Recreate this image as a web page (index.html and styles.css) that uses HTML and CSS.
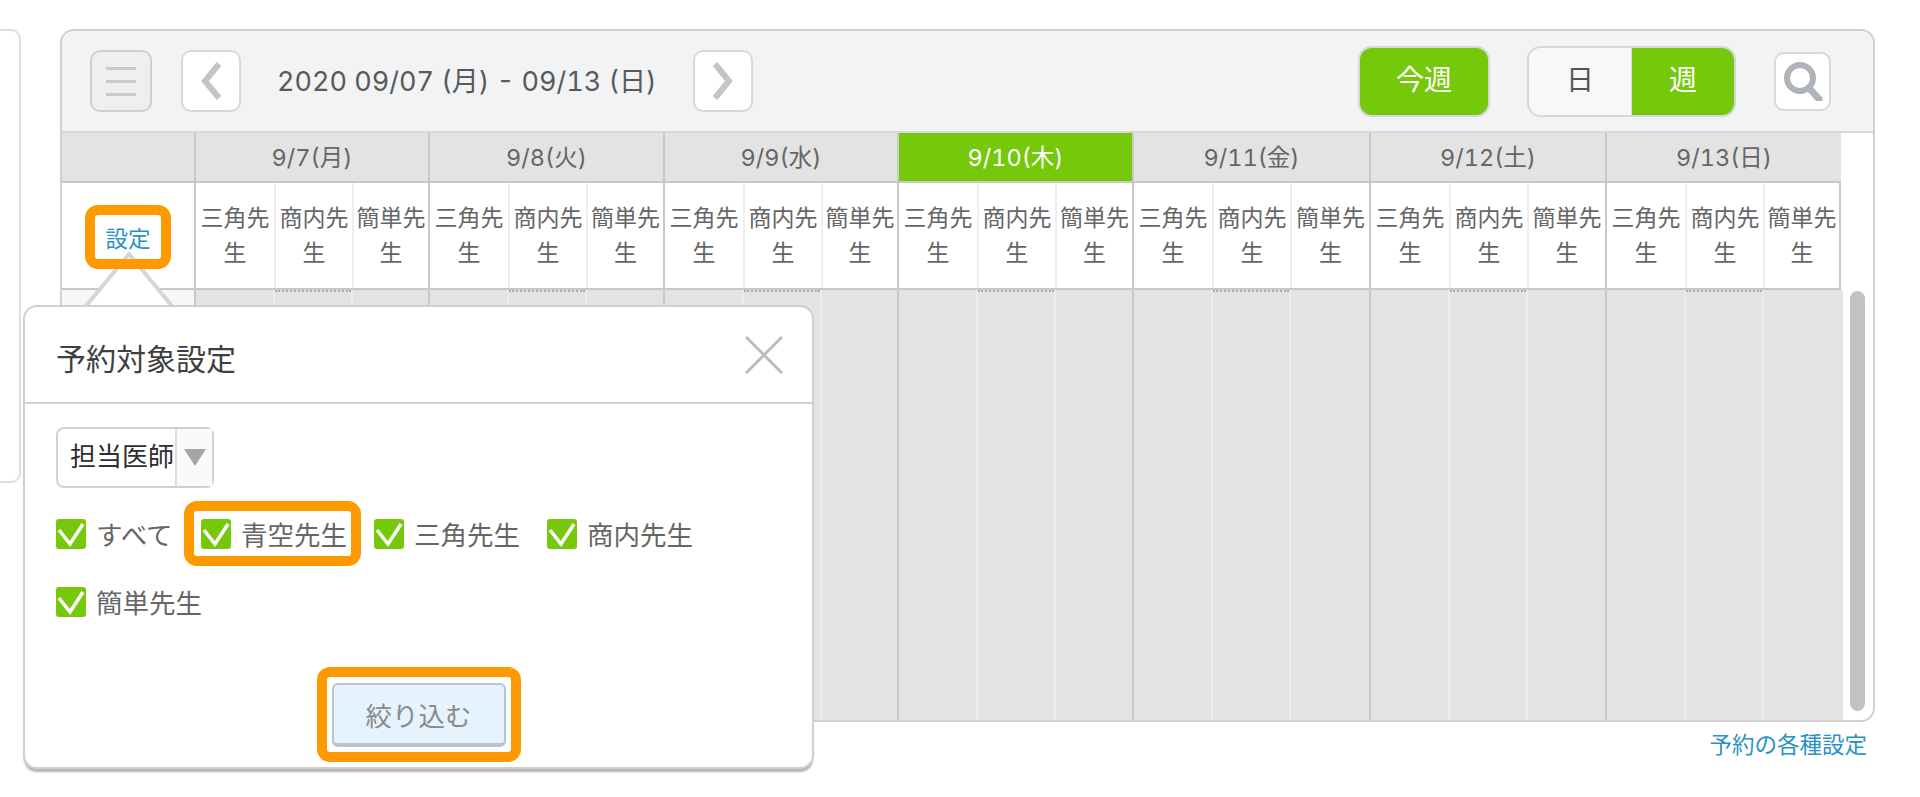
FILE: index.html
```html
<!DOCTYPE html>
<html lang="ja">
<head>
<meta charset="utf-8">
<title>予約</title>
<link rel="stylesheet" href="styles.css">
</head>
<body>
<div class="page">
  <aside class="side"></aside>
  <main class="main-col">
    <section class="panel">
      <header class="toolbar">
        <button class="btn menu" aria-label="menu"><span></span><span></span><span></span></button>
        <button class="btn nav" aria-label="prev"><svg width="24" height="38" viewBox="0 0 24 38"><path d="M20 2 L6 19 L20 36" class="chev"/></svg></button>
        <div class="range">2020 09/07 (月) - 09/13 (日)</div>
        <button class="btn nav next" aria-label="next"><svg width="24" height="38" viewBox="0 0 24 38"><path d="M4 2 L18 19 L4 36" class="chev"/></svg></button>
        <button class="btn today">今週</button>
        <div class="toggle"><span class="tog-day">日</span><span class="tog-week">週</span></div>
        <button class="btn search" aria-label="search"><svg width="40" height="40" viewBox="0 0 40 40"><circle cx="17" cy="17" r="13" class="mag"/><path d="M26 27 L36 38" class="mag handle"/></svg></button>
      </header>
      <div class="head-row cols">
        <div class="time-cell"></div>
        <div class="day">9/7(月)</div>
        <div class="day">9/8(火)</div>
        <div class="day">9/9(水)</div>
        <div class="day active">9/10(木)</div>
        <div class="day">9/11(金)</div>
        <div class="day">9/12(土)</div>
        <div class="day">9/13(日)</div>
      </div>
      <div class="names-row cols">
        <div class="time-cell setting"><a class="link">設定</a></div>
        <div class="day-names"><div>三角先生</div><div>商内先生</div><div>簡単先生</div></div>
        <div class="day-names"><div>三角先生</div><div>商内先生</div><div>簡単先生</div></div>
        <div class="day-names"><div>三角先生</div><div>商内先生</div><div>簡単先生</div></div>
        <div class="day-names"><div>三角先生</div><div>商内先生</div><div>簡単先生</div></div>
        <div class="day-names"><div>三角先生</div><div>商内先生</div><div>簡単先生</div></div>
        <div class="day-names"><div>三角先生</div><div>商内先生</div><div>簡単先生</div></div>
        <div class="day-names last"><div>三角先生</div><div>商内先生</div><div>簡単先生</div></div>
      </div>
      <div class="body-row">
        <div class="grid">
          <div class="time-body"></div>
          <div class="day-body"><i></i><i class="dot"></i><i></i></div>
          <div class="day-body"><i></i><i class="dot"></i><i></i></div>
          <div class="day-body"><i></i><i class="dot"></i><i></i></div>
          <div class="day-body"><i></i><i class="dot"></i><i></i></div>
          <div class="day-body"><i></i><i class="dot"></i><i></i></div>
          <div class="day-body"><i></i><i class="dot"></i><i></i></div>
          <div class="day-body"><i></i><i class="dot"></i><i></i></div>
        </div>
        <div class="scroll"><div class="thumb"></div></div>
      </div>
    </section>
    <a class="link foot-link">予約の各種設定</a>
  </main>

  <div class="pop-arrow"><svg width="92" height="56" viewBox="0 0 92 56"><path d="M0 54 L44 1 L88 54 Z" class="arrow-fill"/><path d="M1 54 L44 2 L87 54" class="arrow-line"/></svg></div>
  <div class="popup">
    <div class="pop-head">
      <h2 class="pop-title">予約対象設定</h2>
      <svg class="close" width="38" height="38" viewBox="0 0 38 38"><path d="M1 1 L37 37 M37 1 L1 37" class="close-line"/></svg>
    </div>
    <div class="pop-body">
      <div class="select"><span class="select-text">担当医師</span><span class="select-arrow"><svg width="22" height="17" viewBox="0 0 22 17"><path d="M0 0 H22 L11 17 Z" class="tri"/></svg></span></div>
      <div class="checks">
        <label class="check"><span class="box"><svg width="30" height="30" viewBox="0 0 30 30"><path d="M3 11 L14 25 L27 5" class="tick"/></svg></span>すべて</label>
        <label class="check"><span class="box"><svg width="30" height="30" viewBox="0 0 30 30"><path d="M3 11 L14 25 L27 5" class="tick"/></svg></span>青空先生</label>
        <label class="check"><span class="box"><svg width="30" height="30" viewBox="0 0 30 30"><path d="M3 11 L14 25 L27 5" class="tick"/></svg></span>三角先生</label>
        <label class="check"><span class="box"><svg width="30" height="30" viewBox="0 0 30 30"><path d="M3 11 L14 25 L27 5" class="tick"/></svg></span>商内先生</label>
        <label class="check"><span class="box"><svg width="30" height="30" viewBox="0 0 30 30"><path d="M3 11 L14 25 L27 5" class="tick"/></svg></span>簡単先生</label>
      </div>
      <div class="pop-foot"><button class="filter">絞り込む</button></div>
    </div>
  </div>

  <div class="mark mark-setting"></div>
  <div class="mark mark-check"></div>
  <div class="mark mark-filter"></div>
</div>
</body>
</html>
```
FILE: styles.css
```css
* { box-sizing: border-box; }
html, body { margin: 0; padding: 0; height: 797px; overflow: hidden; background: #fff; }
body { font-family: "Inter", "Noto Sans CJK JP", sans-serif; font-variant-numeric: tabular-nums; color: #666; }
.page { position: relative; width: 1920px; height: 797px; display: flex; align-items: flex-start; padding-top: 29px; }
button { font-family: inherit; padding: 0; margin: 0; cursor: pointer; }

.side { width: 21px; height: 454px; border: 2px solid #ddd; border-left: 0; border-radius: 0 10px 10px 0; flex: none; }
.main-col { margin-left: 39px; width: 1815px; flex: none; display: flex; flex-direction: column; }
.panel { width: 1815px; height: 693px; border: 2px solid #d0d0d0; border-radius: 14px; display: flex; flex-direction: column; overflow: hidden; background: #fff; }

.toolbar { height: 102px; flex: none; background: #f2f3f5; display: flex; align-items: center; padding: 0 0 0 28px; border-bottom: 2px solid #d8d8d8; }
.btn { border: 2px solid #d8d8d8; border-radius: 10px; background: #fff; display: flex; align-items: center; justify-content: center; flex: none; }
.menu { width: 62px; height: 62px; background: #efefef; border-color: #cfcfcf; flex-direction: column; gap: 10px; }
.menu span { display: block; width: 30px; height: 3px; background: #c9c9c9; }
.nav { width: 60px; height: 62px; margin-left: 29px; }
.chev { fill: none; stroke: #c4c4c4; stroke-width: 6; }
.range { width: 392px; margin-left: 36px; padding-bottom: 4px; font-size: 27px; color: #595959; white-space: nowrap; }
.next { margin-left: 24px; }
.today { width: 132px; height: 71px; margin-left: 605px; padding-bottom: 6px; background: #76c80b; color: #fff; font-size: 28px; border: 2px solid #d5d8da; border-radius: 14px; }
.toggle { width: 209px; height: 71px; margin-left: 37px; display: flex; border: 2px solid #d5d8da; border-radius: 14px; overflow: hidden; font-size: 28px; flex: none; }
.tog-day { width: 103px; padding-bottom: 6px; background: #f8f8f8; color: #555; display: flex; align-items: center; justify-content: center; border-right: 1px solid #ddd; }
.tog-week { flex: 1; padding-bottom: 6px; background: #76c80b; color: #fff; display: flex; align-items: center; justify-content: center; }
.search { width: 57px; height: 59px; margin-left: 38px; }
.mag { fill: none; stroke: #aeb4b9; stroke-width: 6; }
.handle { stroke-width: 7; stroke-linecap: round; }

.cols { display: grid; width: 1779px; grid-template-columns: 132px 234px 235px 234px 235px 237px 236px 236px; flex: none; }
.head-row { height: 50px; background: #e3e3e3; border-bottom: 2px solid #c8c8c8; font-size: 23.5px; }
.day { display: flex; align-items: center; justify-content: center; border-left: 2px solid #c8c8c8; color: #666; padding-bottom: 3px; }
.active { background: #76c80b; color: #fff; }

.names-row { height: 107px; border-bottom: 2px solid #c8c8c8; font-size: 23px; line-height: 35px; }
.setting { display: flex; align-items: center; justify-content: center; padding-top: 5px; }
.link { color: #2a93c5; font-size: 22.5px; }
.day-names { display: grid; grid-template-columns: 78px 78px 1fr; border-left: 2px solid #c8c8c8; min-width: 0; }
.day-names.last { border-right: 2px solid #c8c8c8; }
.day-names div { min-width: 0; text-align: center; padding: 18px 0 0; border-left: 2px solid #eee; color: #666; }
.day-names div:first-child { border-left: 0; }

.body-row { flex: 1; display: flex; min-height: 0; }
.grid { width: 1781px; display: grid; grid-template-columns: 132px 234px 235px 234px 235px 237px 236px 238px; flex: none; }
.time-body { background: #f7f7f7; }
.day-body { display: grid; grid-template-columns: 77px 78px 1fr; background: #e3e3e3; border-left: 2px solid #c8c8c8; min-width: 0; }
.day-body i { border-left: 2px solid #ececec; }
.day-body i:first-child { border-left: 0; }
.day-body .dot { position: relative; }
.day-body .dot::before { content: ""; position: absolute; left: 0; right: 0; top: 0; border-top: 2px dotted #aaa; }
.scroll { flex: 1; padding: 1px 0 0 7px; }
.thumb { width: 15px; height: 420px; background: #c2c2c2; border-radius: 8px; }

.foot-link { align-self: flex-end; margin: 7px 8px 0 0; line-height: 32px; }

.pop-arrow { position: absolute; left: 85px; top: 252px; width: 92px; height: 56px; }
.arrow-fill { fill: #fff; }
.arrow-line { fill: none; stroke: #d6d6d6; stroke-width: 4; }

.popup { position: absolute; left: 23px; top: 305px; width: 791px; height: 464px; background: #fff; border: 2px solid #d0d0d0; border-radius: 14px; box-shadow: 0 4px 2px -1px #b5b5b5; display: flex; flex-direction: column; }
.pop-head { height: 97px; flex: none; display: flex; align-items: center; justify-content: space-between; padding: 4px 29px 0 31px; border-bottom: 2px solid #d0d0d0; }
.pop-title { margin: 0; font-size: 30px; font-weight: 400; color: #3f3f3f; }
.close { margin-top: -4px; }
.close-line { stroke: #bbb; stroke-width: 3; fill: none; }
.pop-body { flex: 1; padding: 23px 31px 0; display: flex; flex-direction: column; }
.select { width: 158px; height: 61px; border: 2px solid #d0d0d0; border-radius: 8px; display: flex; }
.select-text { width: 117px; padding-left: 12px; font-size: 26px; line-height: 55px; color: #2e2e2e; white-space: nowrap; flex: none; }
.select-arrow { flex: 1; border-left: 2px solid #ddd; background: #fafafa; display: flex; align-items: center; justify-content: center; }
.tri { fill: #a4a4a4; }
.checks { display: flex; flex-wrap: wrap; margin-top: 30px; width: 700px; row-gap: 37px; }
.check { display: flex; align-items: center; height: 31px; font-size: 26.5px; color: #666; margin-right: 27px; white-space: nowrap; }
.check:first-child { margin-right: 28.5px; }
.box { width: 30px; height: 30px; background: #76c80b; border-radius: 3px; margin-right: 10px; display: block; }
.box svg { display: block; }
.tick { fill: none; stroke: #fff; stroke-width: 3.5; }
.pop-foot { display: flex; justify-content: center; margin-top: 66px; }
.filter { width: 174px; height: 64px; background: #e5f3fe; border: 2px solid #b8c4cf; border-bottom-width: 4px; border-radius: 6px; font-size: 26.5px; color: #8a8a8a; }

.mark { position: absolute; border: 10px solid #ff9900; border-radius: 13px; pointer-events: none; }
.mark-setting { left: 85px; top: 205px; width: 86px; height: 64px; }
.mark-check { left: 184px; top: 501px; width: 177px; height: 65px; }
.mark-filter { left: 317px; top: 667px; width: 204px; height: 95px; }
```
